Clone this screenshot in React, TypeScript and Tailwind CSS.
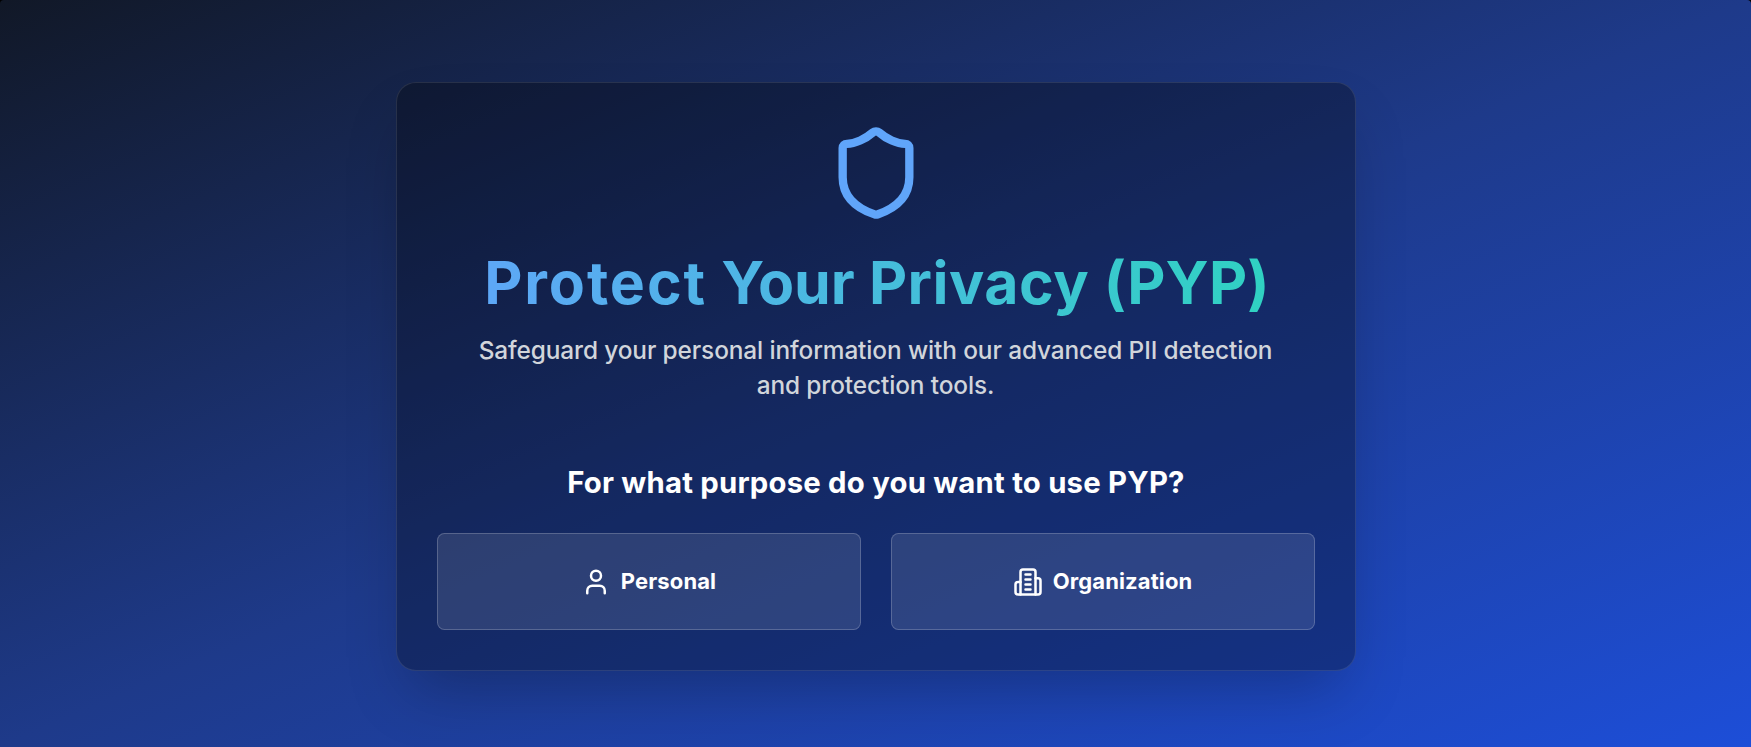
import type { ReactNode } from "react";
import { Shield, User } from "lucide-react";

function BuildingIcon() {
  return (
    <svg className="size-[30px] shrink-0" viewBox="0 0 24 24" fill="none" stroke="currentColor" strokeWidth="2" strokeLinecap="round" strokeLinejoin="round">
      <path d="M6 22V4a2 2 0 0 1 2-2h8a2 2 0 0 1 2 2v18Z" />
      <path d="M6 12H4a2 2 0 0 0-2 2v6a2 2 0 0 0 2 2h2" />
      <path d="M18 9h2a2 2 0 0 1 2 2v9a2 2 0 0 1-2 2h-2" />
      <path d="M10 6h4M10 10h4M10 14h4M10 18h4" />
    </svg>
  );
}

function PurposeButton({ icon, children }: { icon: ReactNode; children: ReactNode }) {
  return (
    <button className="flex h-[97px] items-center justify-center gap-2.5 rounded-[7.5px] border border-white/20 bg-white/[0.11] text-[22px] font-bold tracking-[0.12px]">
      {icon}
      <span>{children}</span>
    </button>
  );
}

export default function App() {
  return (
    <main className="h-[747px] bg-black font-['Inter',sans-serif] text-white">
      <div className="flex h-full justify-center rounded-t-[4px] bg-linear-to-br/srgb from-[#111827] via-[#1e3a8a] to-[#1d4ed8] pt-[82px]">
        <section className="h-[589px] w-[960px] rounded-[20px] border border-white/10 bg-black/30 p-10 text-center shadow-[0_31px_62px_-15px_rgba(0,0,0,0.25)]">
          <Shield className="mx-auto size-[100px] text-[#60a5fa]" />
          <h1 className="mt-[22px] bg-linear-to-r/srgb from-[#60a5fa] to-[#2dd4bf] bg-clip-text pl-[3px] text-[59px] leading-[75px] font-bold tracking-[0.35px] text-transparent">
            <span className="tracking-[1.9px]">Protect</span> <span className="tracking-[-0.1px]">Your</span>{" "}
            <span className="tracking-[0.5px]">Privacy</span> <span className="tracking-[0.2px]">(PYP)</span>
          </h1>
          <p className="mt-[13px] text-[24.4px] leading-[35px] font-[450] tracking-[-0.11px] text-[#d1d5db]">
            Safeguard your personal information with our advanced PII detection
            <br />
            and protection tools.
          </p>
          <h2 className="mt-[60px] pl-px text-[29.3px] leading-10 font-bold tracking-[0.22px]">For what purpose do you want to use PYP?</h2>
          <div className="mt-[30px] grid grid-cols-2 gap-[30px]">
            <PurposeButton icon={<User className="size-[30px]" />}>Personal</PurposeButton>
            <PurposeButton icon={<BuildingIcon />}>Organization</PurposeButton>
          </div>
        </section>
      </div>
    </main>
  );
}
